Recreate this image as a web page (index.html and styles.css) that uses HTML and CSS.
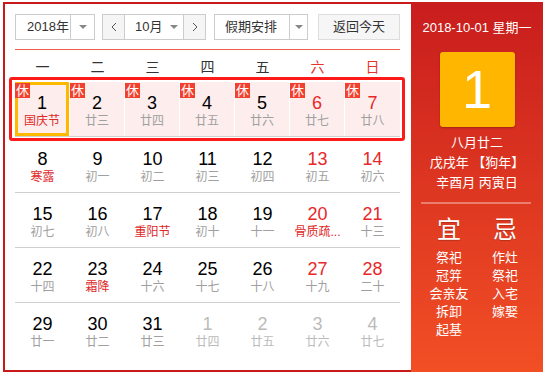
FILE: index.html
```html
<!DOCTYPE html>
<html lang="zh-CN">
<head>
<meta charset="utf-8">
<title>万年历</title>
<link rel="stylesheet" href="styles.css">
</head>
<body>
<div class="cal">
  <div class="main">
    <div class="toolbar">
      <div class="sel year"><span class="txt">2018年</span><span class="arr"><i class="tri"></i></span></div>
      <div class="sel mon">
        <span class="nav prev"><svg width="6" height="10" viewBox="0 0 6 10"><polyline points="5,1 1,5 5,9" fill="none" stroke="#555" stroke-width="1"/></svg></span>
        <span class="txt">10月</span><span class="marr"><i class="tri"></i></span>
        <span class="nav next"><svg width="6" height="10" viewBox="0 0 6 10"><polyline points="1,1 5,5 1,9" fill="none" stroke="#555" stroke-width="1"/></svg></span>
      </div>
      <div class="sel hol-sel"><span class="txt">假期安排</span><span class="arr narrow"><i class="tri"></i></span></div>
      <div class="btn">返回今天</div>
    </div>
    <div class="line"></div>
    <div class="week">
      <span>一</span><span>二</span><span>三</span><span>四</span><span>五</span><span class="we">六</span><span class="we">日</span>
    </div>
    <div class="hol">
      <div class="row holrow">
        <div class="cell today"><i class="xiu">休</i><div class="n">1</div><div class="l fest">国庆节</div></div>
        <div class="cell"><i class="xiu">休</i><div class="n">2</div><div class="l">廿三</div></div>
        <div class="cell"><i class="xiu">休</i><div class="n">3</div><div class="l">廿四</div></div>
        <div class="cell"><i class="xiu">休</i><div class="n">4</div><div class="l">廿五</div></div>
        <div class="cell"><i class="xiu">休</i><div class="n">5</div><div class="l">廿六</div></div>
        <div class="cell"><i class="xiu">休</i><div class="n red">6</div><div class="l">廿七</div></div>
        <div class="cell"><i class="xiu">休</i><div class="n red">7</div><div class="l">廿八</div></div>
      </div>
    </div>
    <div class="row">
      <div class="cell"><div class="n">8</div><div class="l fest">寒露</div></div>
      <div class="cell"><div class="n">9</div><div class="l">初一</div></div>
      <div class="cell"><div class="n">10</div><div class="l">初二</div></div>
      <div class="cell"><div class="n">11</div><div class="l">初三</div></div>
      <div class="cell"><div class="n">12</div><div class="l">初四</div></div>
      <div class="cell"><div class="n red">13</div><div class="l">初五</div></div>
      <div class="cell"><div class="n red">14</div><div class="l">初六</div></div>
    </div>
    <div class="row">
      <div class="cell"><div class="n">15</div><div class="l">初七</div></div>
      <div class="cell"><div class="n">16</div><div class="l">初八</div></div>
      <div class="cell"><div class="n">17</div><div class="l fest">重阳节</div></div>
      <div class="cell"><div class="n">18</div><div class="l">初十</div></div>
      <div class="cell"><div class="n">19</div><div class="l">十一</div></div>
      <div class="cell"><div class="n red">20</div><div class="l fest" title="骨质疏松日">骨质疏...</div></div>
      <div class="cell"><div class="n red">21</div><div class="l">十三</div></div>
    </div>
    <div class="row">
      <div class="cell"><div class="n">22</div><div class="l">十四</div></div>
      <div class="cell"><div class="n">23</div><div class="l fest">霜降</div></div>
      <div class="cell"><div class="n">24</div><div class="l">十六</div></div>
      <div class="cell"><div class="n">25</div><div class="l">十七</div></div>
      <div class="cell"><div class="n">26</div><div class="l">十八</div></div>
      <div class="cell"><div class="n red">27</div><div class="l">十九</div></div>
      <div class="cell"><div class="n red">28</div><div class="l">二十</div></div>
    </div>
    <div class="row last">
      <div class="cell"><div class="n">29</div><div class="l">廿一</div></div>
      <div class="cell"><div class="n">30</div><div class="l">廿二</div></div>
      <div class="cell"><div class="n">31</div><div class="l">廿三</div></div>
      <div class="cell other"><div class="n">1</div><div class="l">廿四</div></div>
      <div class="cell other"><div class="n">2</div><div class="l">廿五</div></div>
      <div class="cell other"><div class="n">3</div><div class="l">廿六</div></div>
      <div class="cell other"><div class="n">4</div><div class="l">廿七</div></div>
    </div>
  </div>
  <div class="side">
    <div class="date">2018-10-01 星期一</div>
    <div class="big">1</div>
    <div class="info">
      <div>八月廿二</div>
      <div>戊戌年 【狗年】</div>
      <div>辛酉月 丙寅日</div>
    </div>
    <div class="divider"></div>
    <div class="yiji">
      <div class="col">
        <div class="head">宜</div>
        <div>祭祀</div><div>冠笄</div><div>会亲友</div><div>拆卸</div><div>起基</div>
      </div>
      <div class="col">
        <div class="head">忌</div>
        <div>作灶</div><div>祭祀</div><div>入宅</div><div>嫁娶</div>
      </div>
    </div>
  </div>
</div>
</body>
</html>
```

FILE: styles.css
```css
* { box-sizing: border-box; }
body {
  margin: 0;
  font-family: "Liberation Sans", "Noto Sans CJK SC", sans-serif;
  background: #fff;
}
.cal {
  display: flex;
  width: 540px;
  height: 370px;
  margin: 2px 0 0 3px;
}
.main {
  width: 408px;
  height: 370px;
  border: 2px solid #c81a1a;
  border-right: none;
  padding: 10px 11px 0 10px;
}
.toolbar {
  display: flex;
  height: 26px;
}
.sel {
  display: flex;
  height: 26px;
  border: 1px solid #ccc;
  background: #fff;
  color: #333;
  font-size: 13px;
  line-height: 24px;
}
.year { width: 80px; }
.year .txt { flex: 1; padding-left: 11px; }
.arr {
  width: 24px;
  border-left: 1px solid #ccc;
  display: flex;
  align-items: center;
  justify-content: center;
}
.arr.narrow { width: 18px; }
.tri {
  display: block;
  width: 0;
  height: 0;
  border-left: 4px solid transparent;
  border-right: 4px solid transparent;
  border-top: 4px solid #888;
}
.mon { width: 104px; margin-left: 7px; }
.nav {
  width: 22px;
  background: #f5f5f5;
  display: flex;
  align-items: center;
  justify-content: center;
}
.prev { border-right: 1px solid #ccc; }
.next { border-left: 1px solid #ccc; }
.mon .txt { padding-left: 10px; width: 40px; }
.marr {
  width: 18px;
  display: flex;
  align-items: center;
  justify-content: center;
}
.hol-sel { width: 94px; margin-left: 8px; }
.hol-sel .txt { flex: 1; padding-left: 10px; }
.btn {
  width: 82px;
  height: 26px;
  margin-left: 10px;
  border: 1px solid #ddd;
  background: #f6f6f6;
  color: #333;
  font-size: 13px;
  line-height: 24px;
  text-align: center;
}
.line {
  height: 1px;
  margin-top: 9px;
  background: #f25a4a;
}
.week {
  display: grid;
  grid-template-columns: repeat(7, 55px);
  height: 27px;
  padding-top: 7px;
  font-size: 14px;
  line-height: 20px;
  color: #333;
  text-align: center;
}
.week .we { color: #e5332a; }
.hol {
  position: relative;
  z-index: 1;
  margin: 0 -5px -3px -6px;
  border: 3px solid #ff1a1a;
  border-radius: 3px;
  padding: 2px 2px 1px 3px;
}
.row {
  display: grid;
  grid-template-columns: repeat(7, 55px);
  border-bottom: 1px solid #cfcfcf;
}
.row.last { border-bottom: none; }
.cell {
  position: relative;
  height: 54px;
  padding-top: 11px;
  text-align: center;
}
.holrow .cell {
  background: #fdeeed;
  border-right: 1px solid #fff;
}
.holrow .cell:last-child { border-right: none; }
.today { box-shadow: inset 0 0 0 3px #ffb800; }
.n {
  font-size: 18px;
  line-height: 20px;
  color: #000;
}
.n.red { color: #e8272a; }
.l {
  font-size: 12px;
  line-height: 16px;
  color: #a0a0a0;
  white-space: nowrap;
}
.l.fest { color: #e02828; }
.other .n, .other .l { color: #bbb; }
.xiu {
  position: absolute;
  top: 1px;
  left: 0;
  width: 15px;
  height: 15px;
  background: #f2402f;
  color: #fff;
  font-style: normal;
  font-size: 13px;
  line-height: 15px;
  text-align: center;
}
.side {
  width: 132px;
  height: 370px;
  background: linear-gradient(#c81d1d, #f24f25);
  color: #fff;
  text-align: center;
  padding-top: 16px;
}
.date {
  font-size: 13px;
  line-height: 20px;
}
.big {
  width: 75px;
  height: 75px;
  margin: 14px auto 0;
  background: #ffb600;
  border-radius: 3px;
  box-shadow: 0 1px 2px rgba(0, 0, 0, 0.25);
  font-size: 54px;
  line-height: 75px;
}
.info {
  margin-top: 6px;
  font-size: 13px;
  line-height: 20px;
}
.divider {
  width: 110px;
  height: 2px;
  margin: 9px 0 0 10px;
  background: rgba(255, 255, 255, 0.35);
}
.yiji {
  display: flex;
  margin-left: 10px;
}
.col {
  width: 56px;
  font-size: 13px;
  line-height: 18px;
}
.col .head {
  margin: 11px 0 4px;
  font-size: 24px;
  line-height: 30px;
  text-shadow: 0 1px 1px rgba(0, 0, 0, 0.2);
}
```
